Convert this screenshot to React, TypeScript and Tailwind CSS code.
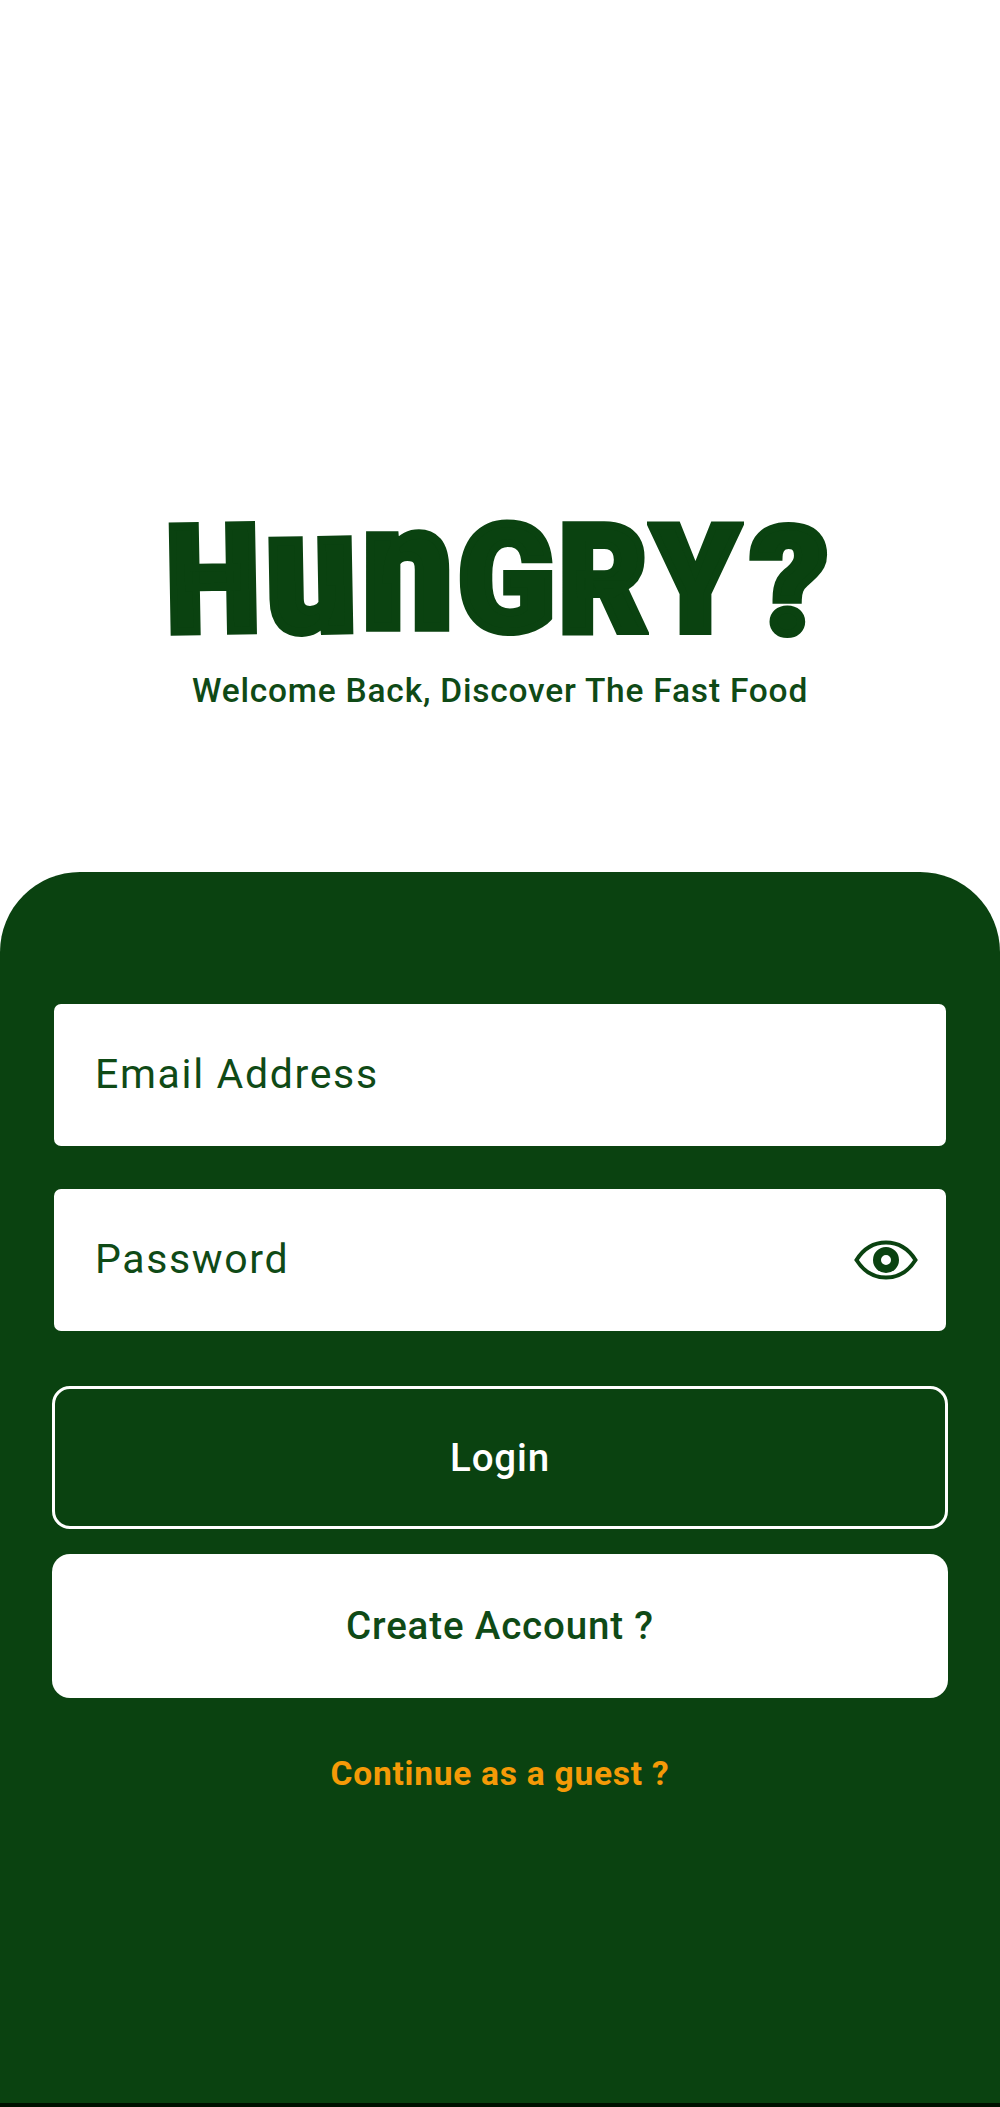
const FONT = 'font-["Roboto","Liberation_Sans",sans-serif]'

// each letter of the logo gets its own box, the transforms fake the hand drawn look
const logoLetters = [
  { ch: 'H', box: 'w-[90px] -ml-[3px]', cls: 'scale-x-[0.9] -rotate-1' },
  { ch: 'U', box: 'w-[92px] ml-[7px]', cls: 'lowercase scale-x-[1.06] scale-y-[1.15] -rotate-1 -translate-y-[8px]' },
  { ch: 'N', box: 'w-[97px] ml-[3px]', cls: 'lowercase scale-x-[1.06] scale-y-[1.17] -translate-y-[13px]' },
  { ch: 'G', box: 'w-[95px] ml-[2px]', cls: 'scale-x-[0.96]' },
  { ch: 'R', box: 'w-[90px] ml-[5px]', cls: 'scale-x-[0.92]' },
  { ch: 'Y', box: 'w-[100px] -ml-[3px]', cls: 'scale-x-[0.94]' },
  { ch: '?', box: 'w-[80px] ml-[4px]', cls: 'scale-x-[1.02] translate-y-[2px]' },
]

function EyeIcon() {
  return (
    <svg viewBox="0 0 64 40" className="h-[40px] w-[64px] fill-none stroke-[#0a4210]">
      <path d="M2.5 20C10 8 20 2.5 32 2.5S54 8 61.5 20C54 32 44 37.5 32 37.5S10 32 2.5 20Z" strokeWidth="4" />
      <circle cx="32" cy="20" r="9" strokeWidth="8" />
    </svg>
  )
}

function Field({ label, children }: { label: string; children?: React.ReactNode }) {
  return (
    <div className="flex h-[142px] items-center justify-between rounded-[7px] bg-white pr-[28px] pl-[41px]">
      <span className="-mt-[2px] text-[41px] leading-none tracking-[1.65px] text-[#0f4a16]">{label}</span>
      {children}
    </div>
  )
}

export default function App() {
  return (
    <div className={`flex min-h-[2107px] flex-col bg-white ${FONT}`}>
      <section className="flex h-[872px] flex-col items-center pt-[516px]">
        <h1 className="flex h-[130px] items-center text-[148px] leading-none font-black text-[#0a4210] [-webkit-text-stroke:8px_#0a4210]">
          {logoLetters.map((l, i) => (
            <span key={i} className={`flex justify-center ${l.box}`}>
              <span className={`inline-block ${l.cls}`}>{l.ch}</span>
            </span>
          ))}
        </h1>
        <p className="mt-[28px] text-[33.5px] leading-none font-medium tracking-[0.78px] text-[#0f4a16]">Welcome Back, Discover The Fast Food</p>
      </section>

      <section className="flex flex-1 flex-col rounded-t-[80px] bg-[#0a4210] px-[52px] pt-[132px]">
        <div className="flex flex-col gap-[43px] px-[2px]">
          <Field label="Email Address" />
          <Field label="Password">
            <EyeIcon />
          </Field>
        </div>
        <button className="mt-[55px] flex h-[143px] items-center justify-center rounded-[18px] border-[3px] border-white text-[38.5px] font-medium tracking-[0.85px] text-white">Login</button>
        <button className="mt-[25px] flex h-[144px] items-center justify-center rounded-[18px] bg-white text-[38.5px] font-medium tracking-[0.85px] text-[#0f4a16]">Create Account ?</button>
        <p className="mt-[51px] text-center text-[33.5px] font-bold tracking-[0.75px] text-[#f59a07]">Continue as a guest ?</p>
      </section>
      <div className="h-[4px] bg-[#001000]" />
    </div>
  )
}
